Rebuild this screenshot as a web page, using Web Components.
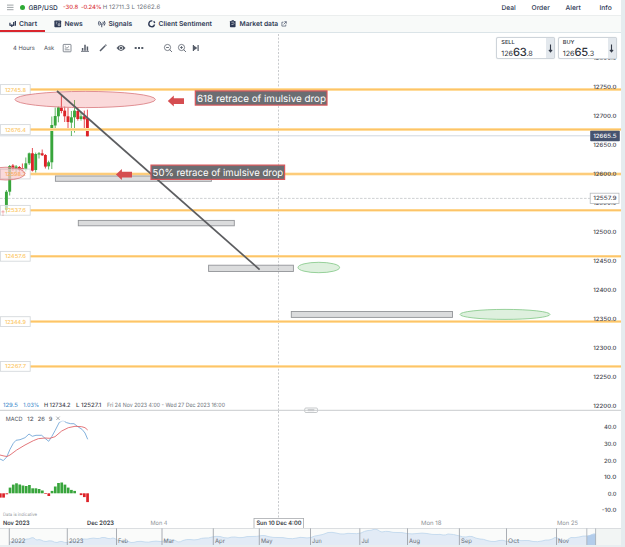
<!DOCTYPE html>
<html lang="en">
<head>
<meta charset="utf-8">
<title>GBP/USD</title>
<style>
    body {
        margin: 0;
        width: 625px;
        height: 547px;
        overflow: hidden;
        background: #e5ecef;
        font-family: Inter, "Liberation Sans", sans-serif;
        color: #2d3954;
        text-rendering: geometricPrecision;
    }
</style>
</head>
<body>
<trading-window>
    <quote-bar slot="quote"></quote-bar>
    <tab-bar slot="tabs">
        <tab-item icon="chart" active style="--w:45px;--pad:8.5px">Chart</tab-item>
        <tab-item icon="news" style="--w:44.5px;--pad:9px">News</tab-item>
        <tab-item icon="signals" style="--w:50px">Signals</tab-item>
        <tab-item icon="sentiment" style="--w:81px">Client Sentiment</tab-item>
        <tab-item icon="market" link style="--w:70px">Market data</tab-item>
    </tab-bar>
    <price-chart slot="chart">
        <chart-toolbar slot="toolbar"></chart-toolbar>
        <price-ticket slot="tickets" side="SELL" big="63" small=".8"></price-ticket>
        <price-ticket slot="tickets" side="BUY" big="65" small=".3"></price-ticket>
    </price-chart>
    <macd-pane slot="macd"></macd-pane>
    <time-axis slot="axis"></time-axis>
    <range-navigator slot="nav"></range-navigator>
</trading-window>

<script>
const ICONS = {
    chart: '<path d="M1 3v3M3 4.5v3M5 2v4.5M6.8 1v5" stroke-width="1.3"/><path d="M1 5.5l2 .7 2-1.2" stroke-width="1"/>',
    news: '<rect x=".4" y=".5" width="7.2" height="7.2" rx=".8" fill="currentColor" stroke="none"/><path d="M2 2.4h1.5M2 4h1M5 2h1M4.5 4h1.7v2H4.5z" stroke="#fff" stroke-width=".6"/>',
    signals: '<path d="M1.4 1q-1.8 2.4 0 5M6.6 1q1.8 2.4 0 5M2.8 2q-1 1.5 0 3M5.2 2q1 1.5 0 3M4 3.4v4.3" stroke-width=".95"/>',
    sentiment: '<path d="M4.6 1A3.1 3.1 0 1 0 7 4.8" stroke-width="1.5"/><path d="M6 1.4A3.1 3.1 0 0 1 7.1 3.4" stroke-width="1.4"/>',
    market: '<rect x="1" y="1" width="6" height="6.7" rx=".7" fill="currentColor" stroke="none"/><path d="M2.8.7h2.4" stroke-width="1"/><path d="M2.5 5.4l1-1 .8.6 1.3-1.6M2.5 2.3h3" stroke="#fff" stroke-width=".6"/>',
    external: '<path d="M3.3 1.6H1.2v5.2h5.2V4.7M4.4.9h2.7v2.7M7 1L3.5 4.5" stroke-width=".8"/>',
    grid: '<rect x=".2" y=".4" width="7.8" height="7.4" rx=".6" stroke-width=".7"/><path d="M1.8 5.8h4.8M1.8 4.5l1.2-.8 1 .5 2-1.8M1.8 2.2h1" stroke-width=".65"/>',
    bars: '<path d="M1.6 6.8V4M4 6.8V.8M6.4 6.8V2.4" stroke-width="1.5"/><path d="M0 7.4h8" stroke-width=".8"/>',
    pencil: '<path d="M1 7L6.2 1.8M6.5 1.5l.8-.8" stroke-width="1.5"/>',
    eye: '<path d="M-.5 4Q4-2 8.5 4Q4 10 -.5 4z" fill="currentColor" stroke="none"/><circle cx="4" cy="4" r="1.9" fill="#fff" stroke="none"/><circle cx="4" cy="4" r="1.2" fill="currentColor" stroke="none"/>',
    more: '<path d="M-.3 4h2M3 4h2M6.3 4h2" stroke-width="1.9"/>',
    out: '<circle cx="3.5" cy="3.5" r="3.1" stroke-width=".75"/><path d="M5.6 5.6L8 8M2.1 3.5h2.8" stroke-width=".85"/>',
    in: '<circle cx="3.5" cy="3.5" r="3.1" stroke-width=".75"/><path d="M5.6 5.6L8 8M2.1 3.5h2.8M3.5 2.1v2.8" stroke-width=".85"/>',
    end: '<path d="M1 .9v6.2L5.4 4z" fill="currentColor" stroke="none"/><path d="M6.1 1v6M1.4 1v6" stroke-width="1.2"/>'
};

const icon = (name, size = 8) =>
    `<svg width="${size}" height="${size}" viewBox="0 0 8 8" fill="none" stroke="currentColor" overflow="visible">${ICONS[name]}</svg>`;

const label = (x, y, text, w, cls = '') =>
    `<text x="${x}" y="${y}" class="${cls}" textLength="${w}" lengthAdjust="spacingAndGlyphs">${text}</text>`;

class BaseElement extends HTMLElement {
    constructor() {
        super();
        this.attachShadow({ mode: 'open' });
    }
    connectedCallback() {
        this.shadowRoot.innerHTML = `<style>svg { display: block; flex: none; } ${this.styles()}</style>${this.markup()}`;
    }
}

customElements.define('trading-window', class extends BaseElement {
    styles() {
        return `
            :host { display: flex; flex-direction: column; width: 621px; height: 547px; background: #fff; }
        `;
    }
    markup() {
        return ['quote', 'tabs', 'chart', 'macd', 'axis', 'nav'].map(n => `<slot name="${n}"></slot>`).join('');
    }
});

customElements.define('quote-bar', class extends BaseElement {
    styles() {
        return `
            :host { display: flex; align-items: center; height: 15px; padding-left: 7px; font-size: 6.1px; white-space: nowrap; }
            .menu { color: #858b91; }
            .dot { width: 5.4px; height: 5.4px; border-radius: 50%; background: #2faa35; margin: 0 3px 0 6px; }
            b { width: 34.5px; font-weight: 500; font-size: 6.5px; }
            .red { color: #d9393e; width: 18px; font-size: 5.9px; font-weight: 500; }
            .pct { width: 21.8px; letter-spacing: -.16px; }
            .hl { color: #6b7077; font-size: 6px; letter-spacing: .14px; }
            nav { margin-left: auto; display: flex; font-weight: 500; font-size: 6.7px; }
            nav span:nth-child(1) { width: 30px; }
            nav span:nth-child(2) { width: 34px; }
            nav span:nth-child(3) { width: 34px; }
            nav span:nth-child(4) { width: 21.5px; }
        `;
    }
    markup() {
        return `
            <svg class="menu" width="7" height="7" viewBox="0 0 7 7" stroke="currentColor" stroke-width=".8"><path d="M0 1.1h6.5M0 3.4h6.5M0 5.7h6.5"/></svg>
            <span class="dot"></span><b>GBP/USD</b>
            <span class="red">-30.8</span><span class="red pct">-0.24%</span>
            <span class="hl">H 12711.3 L 12662.6</span>
            <nav><span>Deal</span><span>Order</span><span>Alert</span><span>Info</span></nav>
        `;
    }
});

customElements.define('tab-bar', class extends BaseElement {
    styles() {
        return `
            :host { display: flex; height: 18px; box-sizing: border-box; background: #f8faf9; border-top: 1.5px solid #ebeeee; border-bottom: 1px solid #dbe4e8; }
        `;
    }
    markup() {
        return '<slot></slot>';
    }
});

customElements.define('tab-item', class extends BaseElement {
    styles() {
        return `
            :host { display: flex; align-items: center; gap: 3px; box-sizing: border-box; width: var(--w); padding-left: var(--pad, 8.5px); font-size: 6.7px; font-weight: 600; white-space: nowrap; }
            :host([active]) { box-shadow: inset 0 -2px #da262e; }
        `;
    }
    markup() {
        return `${icon(this.getAttribute('icon'), 7.5)}<span><slot></slot></span>${this.hasAttribute('link') ? icon('external', 6) : ''}`;
    }
});

customElements.define('chart-toolbar', class extends BaseElement {
    styles() {
        return `
            :host { display: flex; align-items: center; height: 10px; font-size: 5.8px; color: #454b55; white-space: nowrap; }
            span { width: 31px; }
            span + span { width: 19px; }
            svg { color: #555c68; margin-right: 10px; }
            svg:nth-of-type(5) { margin-right: 20.5px; }
            svg:nth-of-type(6), svg:nth-of-type(7) { margin-right: 6px; }
        `;
    }
    markup() {
        return '<span>4 Hours</span><span>Ask</span>' +
            ['grid', 'bars', 'pencil', 'eye', 'more', 'out', 'in', 'end'].map(n => icon(n)).join('');
    }
});

customElements.define('price-ticket', class extends BaseElement {
    styles() {
        return `
            :host { display: flex; box-sizing: border-box; width: 59px; height: 22px; background: #fff; border: 1px solid #ced4da; border-radius: 2px; box-shadow: 0 0 1px #ccd2d8; color: #30343c; }
            .quote { flex: 1; padding: 2px 0 0 4.3px; white-space: nowrap; }
            .side { font-size: 5.6px; line-height: 7px; font-weight: 500; }
            .price { font-size: 7.2px; line-height: 11px; display: flex; align-items: baseline; }
            .price b { font-size: 11.2px; font-weight: 500; letter-spacing: -.35px; }
            .arrow { width: 8px; display: grid; place-items: center; background: #e3e8ed; }
        `;
    }
    markup() {
        return `
            <div class="quote">
                <div class="side">${this.getAttribute('side')}</div>
                <div class="price"><span>126</span><b>${this.getAttribute('big')}</b><span>${this.getAttribute('small')}</span></div>
            </div>
            <div class="arrow"><svg width="5" height="9" viewBox="0 0 5 9" fill="none" stroke="#343b49"><path d="M2.5 .5v7M.9 5.8l1.6 2 1.6-2" stroke-width="1.1"/></svg></div>
        `;
    }
});

// plot coordinates are window coordinates, so both panes share one grid
const LEVELS = [[89.5, '12745.8'], [129.5, '12676.4'], [174, '12598.2'], [210.3, '12537.6'], [256.3, '12457.6'], [321.6, '12344.9'], [366.4, '12267.7']];

// x, high, low, body top, body bottom, rising
const CANDLES = [
    [3, 210, 216, 211, 212.5, 0], [6.4, 190, 213.5, 191.7, 210, 1], [9.7, 165, 195.5, 166, 191.7, 1],
    [12.9, 164, 171, 165.5, 168.5, 0], [16.1, 165, 172, 166.5, 169, 1], [19.4, 166, 171.5, 167, 169.5, 0], [22.4, 163.5, 171.5, 168, 169.5, 0],
    [25.8, 157.5, 171.5, 163.3, 169.5, 1], [29.2, 152.5, 165, 153.3, 163.3, 1], [32.4, 148, 171.5, 153.3, 170.6, 0],
    [35.7, 152.6, 173, 154, 170, 1], [39, 152, 158.5, 153.3, 154.5, 1], [42.2, 149.5, 156, 153.3, 155.3, 0],
    [45.4, 154, 168.5, 155, 166.6, 0], [48.6, 160.7, 169.5, 162.3, 166.3, 1], [51.8, 116.5, 169, 125, 162.3, 1],
    [55.2, 107.5, 131, 116, 125.5, 1], [58.4, 106.6, 122.3, 107.3, 116.3, 1], [61.4, 95, 113.3, 107.6, 111, 0],
    [64.7, 106.6, 122, 110.6, 116.3, 0], [68, 107.6, 130.3, 116.3, 122, 0], [71.4, 111, 136, 117.3, 122.6, 1],
    [74.5, 100, 132.6, 110.6, 117.3, 1], [77.8, 107, 120.6, 111, 119, 0], [81, 111.6, 120.6, 116.3, 119, 1],
    [84.3, 110.6, 129.3, 116.3, 119.3, 0], [87.4, 109.6, 136.3, 118.3, 136.3, 0]
];

customElements.define('price-chart', class extends BaseElement {
    styles() {
        return `
            :host { display: block; position: relative; height: 378px; }
            .toolbar { position: absolute; left: 13px; top: 10px; }
            .tickets { position: absolute; left: 496px; top: 4px; display: flex; gap: 2.5px; }
            text { font-size: 5.9px; font-weight: 500; fill: #3f444d; }
            .tag { fill: #fcc766; font-size: 5.6px; }
            .inv { fill: #fff; }
            .note { fill: #fff; font-size: 9.8px; font-weight: 400; }
            .blue { fill: #4b91ce; }
            .dim { fill: #6f757c; font-weight: 400; }
            .strong { font-weight: 500; }
        `;
    }
    candles() {
        return CANDLES.map(([x, hi, lo, top, bottom, up]) => {
            const c = up ? '#38a53c' : '#dd2228';
            return `<path d="M${x} ${hi}V${lo}" stroke="${c}" stroke-width=".8"/><rect x="${x - 1.45}" y="${top}" width="2.9" height="${bottom - top}" fill="${c}"/>`;
        }).join('');
    }
    levels() {
        return LEVELS.map(([y, price]) => `
            <path d="M30 ${y}H621" stroke="#ffe4ae" stroke-width="2.8"/>
            <path d="M30 ${y}H621" stroke="#fdc468" stroke-width="1.5"/>
            <rect x=".4" y="${y - 4.9}" width="29.8" height="9.8" fill="#fff" fill-opacity=".65" stroke="#d5d9dc" stroke-width=".9"/>
            ${label(5, y + 2, price, 21, 'tag')}`).join('');
    }
    axis() {
        let out = '';
        for (let i = 0; i <= 12; i++) {
            out += label(593.3, 60.2 + i * 29.02, (12800 - i * 50).toFixed(1), 23.2);
        }
        return out;
    }
    markup() {
        return `
            <svg width="621" height="378" viewBox="0 33 621 378">
                <path d="M278.5 34V410" stroke="#c2c4c7" stroke-width=".9" stroke-dasharray="2 1.6"/>
                <path d="M0 198.4H590" stroke="#c3c5c8" stroke-width=".8" stroke-dasharray="2.6 1.4"/>
                <path d="M0 135.8H590" stroke="#d0d8df" stroke-width="1"/>
                ${this.candles()}
                ${this.levels()}
                ${this.axis()}
                <g fill="#909295" fill-opacity=".32" stroke="#929498" stroke-width=".9">
                    <rect x="55.4" y="176" width="156" height="5.3"/>
                    <rect x="78.3" y="220.4" width="156" height="5.4"/>
                    <rect x="208.6" y="265.2" width="84.8" height="6.3"/>
                    <rect x="291.3" y="311.5" width="161.2" height="5.9"/>
                </g>
                <g fill="#e65158" fill-opacity=".22" stroke="#dc8589" stroke-width=".9">
                    <ellipse cx="85.2" cy="99.5" rx="70.2" ry="8.1"/>
                    <ellipse cx="6" cy="173.6" rx="19" ry="6.4"/>
                </g>
                <g fill="#58b55c" fill-opacity=".2" stroke="#80c684" stroke-width=".8">
                    <ellipse cx="318.8" cy="267.5" rx="20.8" ry="5.2"/>
                    <ellipse cx="505" cy="314.4" rx="45" ry="5"/>
                </g>
                <path d="M57 91L259.6 269.6" stroke="#5c5d60" stroke-width="1.7"/>
                <g fill="#d54d50">
                    <path d="M167.8 101L173.8 95.4V98.2H184V104H173.8V106.4Z"/>
                    <path d="M115.9 174.6L121.9 169V171.8H132V177.6H121.9V180Z"/>
                </g>
                <g fill="#5b5d63" fill-opacity=".9" stroke="#d9575b" stroke-width="1.2">
                    <rect x="195.3" y="90.9" width="131.7" height="14.2"/>
                    <rect x="151" y="165.1" width="133.6" height="14.3"/>
                </g>
                ${label(197, 101.6, '618 retrace of imulsive drop', 128.9, 'note')}
                ${label(152.6, 175.6, '50% retrace of imulsive drop', 130.6, 'note')}
                <rect x="590.2" y="130.8" width="29.6" height="10.4" rx=".8" fill="#46536f"/>
                ${label(593.3, 138.2, '12665.5', 23.2, 'inv')}
                <rect x="590.2" y="193.2" width="28.8" height="10.3" fill="#fff" stroke="#b6babd" stroke-width=".8"/>
                ${label(593.3, 200.4, '12557.9', 23.2)}
                ${label(3, 407.2, '129.5', 15, 'blue')}
                ${label(23.3, 407.2, '1.03%', 15.7, 'blue')}
                ${label(44, 407.2, 'H 12734.2', 26.5, 'strong')}
                ${label(76, 407.2, 'L 12527.1', 25.4, 'strong')}
                ${label(107, 407.2, 'Fri 24 Nov 2023 4:00 - Wed 27 Dec 2023 16:00', 118, 'dim')}
                <path d="M0 410.3H621" stroke="#c9cbcd" stroke-width="1"/>
            </svg>
            <div class="toolbar"><slot name="toolbar"></slot></div>
            <div class="tickets"><slot name="tickets"></slot></div>
        `;
    }
});

const HISTOGRAM = [-4.3, -4.3, -1, 5.7, 8.7, 10, 8.8, 7.8, 7.3, 8.3, 5, 5, 4.3, 2.8, -.7, -2.7, 2.4, 6.8, 10.3, 10.8, 8.7, 5.7, 3.4, 2.4, 0, -1.8, -3.8, -8.8];

customElements.define('macd-pane', class extends BaseElement {
    styles() {
        return `
            :host { display: block; height: 106px; }
            svg { overflow: visible; }
            text { font-size: 5.9px; font-weight: 500; fill: #484d55; }
            .head { font-weight: 400; }
            .faint { fill: #94989c; font-size: 4.6px; font-weight: 400; }
        `;
    }
    markup() {
        const bars = HISTOGRAM.map((v, i) =>
            `<rect x="${(i * 3.23 - 1).toFixed(2)}" y="${v > 0 ? 493.3 - v : 493.3}" width="2.7" height="${Math.abs(v)}" fill="${v > 0 ? '#38a53c' : '#dd2228'}"/>`).join('');
        const scale = [[427.2, '40.0', 12.6], [443.9, '30.0', 12.6], [460.4, '20.0', 12.6], [477, '10.0', 12.6], [493.6, '0.0', 8.8], [510.2, '-10.0', 14.8]]
            .map(([y, t, w]) => label(616.5 - w, y + 2.1, t, w)).join('');
        return `
            <svg width="621" height="106" viewBox="0 411 621 106">
                <path d="M278.5 411V518" stroke="#c2c4c7" stroke-width=".9" stroke-dasharray="2 1.6"/>
                <rect x="304.7" y="408" width="12.8" height="4.5" rx="1.2" fill="#fff" stroke="#b8bbbe" stroke-width=".8"/>
                <rect x="307.7" y="409.2" width="6.6" height="2" fill="#c0c2c5"/>
                <polyline fill="none" stroke="#75a8d8" stroke-width=".9" points="0,459 3.3,460.6 6.7,457 10,449.3 13.3,443.3 16,440.3 20,439.7 25,437.7 29,434 32.3,436.3 36,435.3 41.7,435.3 45,438.3 48.7,441.3 51.7,436.7 55,430.7 59.3,422.3 63,420.7 66.7,422.7 70.7,423.7 74,423.7 78.3,427 82,429.3 85,433 87.7,439.3"/>
                <polyline fill="none" stroke="#e0686c" stroke-width=".9" points="0,455 4,456 7,456.5 10,455 16.7,450 25,445 33.3,440.7 38.3,438.7 45,438 50,438.3 55,436.7 61.7,431 68.3,427.7 75,426.3 81.7,426.7 85,427.7 87.7,430"/>
                <rect x="4" y="414.5" width="61" height="7.2" fill="#fff" fill-opacity=".75"/>
                ${label(5.8, 420.5, 'MACD', 16.6, 'head')}
                ${label(27, 420.5, '12', 6.7, 'head')}
                ${label(37.8, 420.5, '26', 7.2, 'head')}
                ${label(48.8, 420.5, '9', 3.6, 'head')}
                <path d="M56.3 416.6l3.4 3.4M59.7 416.6l-3.4 3.4" stroke="#777c82" stroke-width=".6"/>
                ${bars}
                ${scale}
                ${label(3, 515.6, 'Data is indicative', 34, 'faint')}
            </svg>
        `;
    }
});

customElements.define('time-axis', class extends BaseElement {
    styles() {
        return `
            :host { display: block; height: 11px; }
            text { font-size: 6px; fill: #8b8f94; }
            .strong { fill: #353942; font-weight: 600; }
        `;
    }
    markup() {
        return `
            <svg width="621" height="11" viewBox="0 517 621 11">
                ${label(3, 525.4, 'Nov 2023', 26.6, 'strong')}
                ${label(87, 525.4, 'Dec 2023', 27, 'strong')}
                ${label(150.5, 525.4, 'Mon 4', 17, '')}
                ${label(421, 525.4, 'Mon 18', 20.5, '')}
                ${label(557, 525.4, 'Mon 25', 21, '')}
                <rect x="254" y="518.4" width="49.6" height="10" fill="#fff" stroke="#a8abae" stroke-width=".8"/>
                ${label(256.4, 525.4, 'Sun 10 Dec 4:00', 45, 'strong')}
            </svg>
        `;
    }
});

const MONTHS = [[9.3, '2022', 14.5], [67.3, '2023', 14.5], [116.5, 'Feb', 10], [162, 'Mar', 10.5], [213.3, 'Apr', 10], [259.3, 'May', 11.5],
    [310.5, 'Jun', 9.5], [359.8, 'Jul', 7.5], [407.5, 'Aug', 11], [459.4, 'Sep', 11], [506.5, 'Oct', 11], [556.5, 'Nov', 11]];

const HISTORY = [[9, 542.5], [14, 541], [22, 541], [27, 539], [31, 538], [34, 538], [37, 540], [41, 540], [46, 541.5], [52, 541], [57, 542.5], [62, 541.5],
    [67, 542.5], [72, 541.5], [78, 541], [84, 539], [90, 538.5], [97, 538.5], [102, 537.5], [108, 538.5], [113, 538], [117, 540], [125, 541], [131, 542.5],
    [137, 541.5], [145, 542], [152, 541.5], [160, 541.5], [165, 540.5], [169, 539.5], [173, 540], [178, 542], [183, 540.5], [190, 539.5], [198, 539.5],
    [205, 538], [212, 537], [220, 536.5], [228, 538], [235, 537], [243, 537.5], [251, 536.5], [262, 535.5], [268, 536.5], [278, 537.5], [288, 538.5],
    [297, 538], [303, 537.5], [311, 537.5], [318, 535.5], [328, 532.5], [336, 533], [344, 534], [352, 533.5], [361, 533], [368, 530.5], [374, 529.3],
    [378, 530], [382, 532], [389, 531.5], [397, 532.5], [407, 533.5], [417, 533.5], [427, 533.5], [437, 534.5], [443, 535], [448, 534], [459, 535.8],
    [466, 537], [472, 536.5], [480, 539], [487, 540.5], [495, 541.5], [503, 540.3], [510, 541.5], [517, 540], [525, 540.5], [533, 541.5], [542, 541],
    [549, 540], [555, 537.5], [560, 539.5], [566, 541], [571, 537.5], [579, 537], [587, 536], [592, 534.5], [595.7, 534]];

customElements.define('range-navigator', class extends BaseElement {
    styles() {
        return `
            :host { display: block; height: 19px; background: #e9eef0; }
            text { font-size: 6.1px; fill: #6b7178; }
        `;
    }
    markup() {
        // small alternating offset gives the flat stretches their jagged edge
        const pts = [];
        HISTORY.forEach(([x, y], i) => {
            pts.push(`${x},${y}`);
            const next = HISTORY[i + 1];
            if (next) pts.push(`${(x + next[0]) / 2},${(y + next[1]) / 2 + (i % 2 ? .4 : -.4)}`);
        });
        const line = pts.join(' ');
        return `
            <svg width="621" height="17" viewBox="0 528 621 17">
                <rect x="0" y="528" width="621" height="17" fill="#fafbfa"/>
                <rect x="596" y="528" width="25" height="17" fill="#f2f5f4"/>
                <polygon fill="#e2ebf6" points="9,545 ${line} 595.7,545"/>
                <polyline fill="none" stroke="#bcd5ec" stroke-width=".8" points="${line}"/>
                <path d="M0 528.4H621" stroke="#d3d7da" stroke-width=".9"/>
                <polygon fill="#b3cdeb" points="587,545 587,536 592,534.5 595.7,534 595.7,545"/>
                <path d="M586.8 528.4V545M595.6 528.4V545" stroke="#a3abb3" stroke-width=".8"/>
                ${MONTHS.map(([x, t, w]) => `<path d="M${x} 528.4V545" stroke="#959ba2" stroke-width=".8"/>${label(x + 1.6, 542.8, t, w)}`).join('')}
            </svg>
        `;
    }
});
</script>
</body>
</html>
